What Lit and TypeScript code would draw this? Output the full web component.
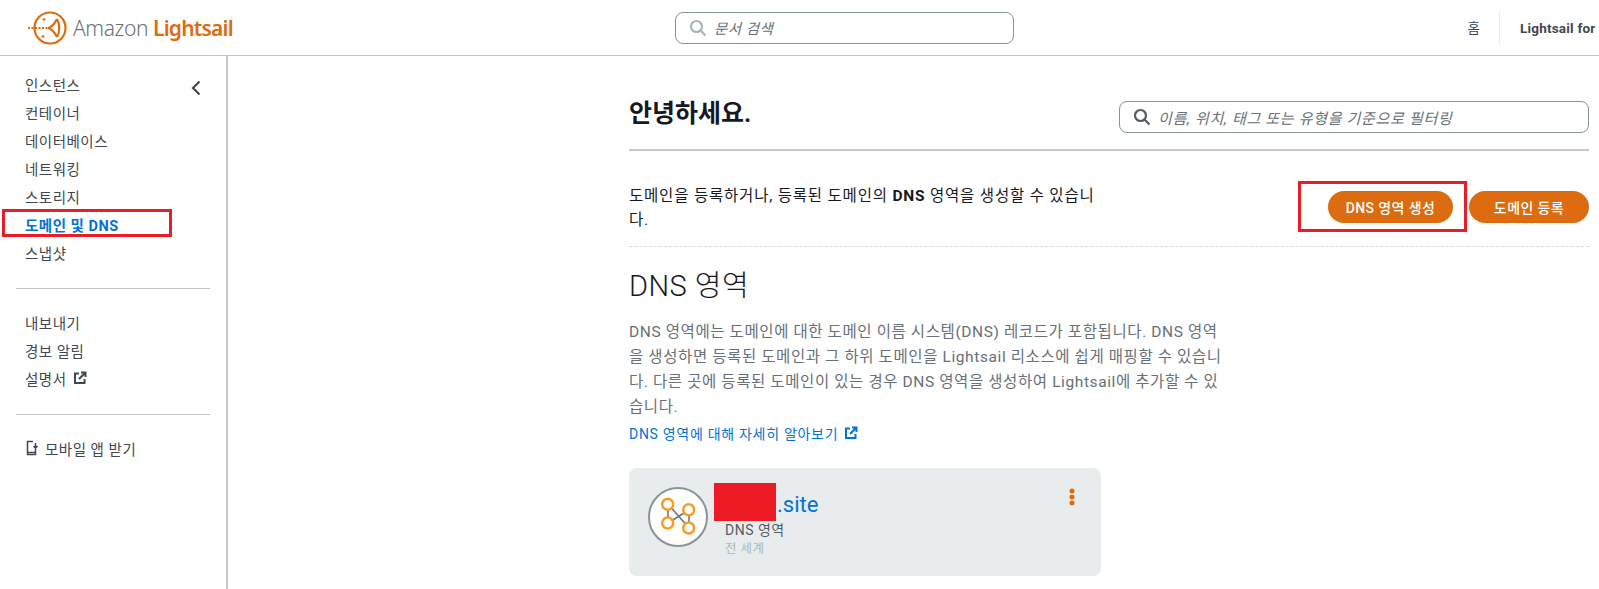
import { LitElement, html, css } from "lit";
import { customElement } from "lit/decorators.js";

const externalIcon = (color: string) => html`
  <svg class="ext" width="14" height="14" viewBox="0 0 14 14" fill="none" stroke=${color} stroke-width="2">
    <path d="M6 2.500H2v9.500h9.500V8" />
    <path d="M6 8l6-6M8 1.500h4.500V6" />
  </svg>
`;

const searchIcon = (color: string) => html`
  <svg width="18" height="18" viewBox="0 0 18 18" fill="none" stroke=${color} stroke-width="2.200">
    <circle cx="7.500" cy="7.500" r="5.500" />
    <path d="M11.500 11.500l5 5" />
  </svg>
`;

@customElement("app-root")
export class AppRoot extends LitElement {
  static styles = css`
    :host {
      display: flex;
      flex-direction: column;
      width: 1599px;
      height: 589px;
      overflow: hidden;
      background: #fff;
      color: #16191f;
      font-family: Roboto, "Noto Sans CJK KR", sans-serif;
      font-size: 14.5px;
      letter-spacing: 0.5px;
    }

    header {
      flex: none;
      display: flex;
      align-items: center;
      height: 55px;
      border-bottom: 1px solid #c6c6cd;
      white-space: nowrap;
    }

    .logo {
      display: flex;
      align-items: center;
      width: 675px;
      padding-left: 28px;
      box-sizing: border-box;
      font-family: "Noto Sans", sans-serif;
      font-size: 21px;
      letter-spacing: -0.4px;
    }

    .logo svg {
      margin-right: 5px;
    }

    .logo .amazon {
      color: #6b7178;
      font-weight: 300;
      margin-right: 5px;
    }

    .logo .lightsail {
      color: #dd6b10;
      font-weight: 600;
      letter-spacing: -0.8px;
    }

    .search {
      display: flex;
      align-items: center;
      gap: 7px;
      height: 32px;
      box-sizing: border-box;
      border: 1px solid #879596;
      border-radius: 8px;
      padding-left: 13px;
      font-style: italic;
      color: #687078;
    }

    .doc-search {
      width: 339px;
    }

    .filter {
      width: 470px;
      font-size: 15px;
      letter-spacing: 0.7px;
    }

    .top-links {
      display: flex;
      align-items: center;
      height: 32px;
      margin-left: auto;
      font-size: 13.5px;
      letter-spacing: 0.2px;
      color: #414750;
    }

    .top-links .home {
      padding-right: 19px;
      line-height: 32px;
      border-right: 1px solid #eaeded;
    }

    .top-links b {
      padding-left: 20px;
      width: 79px;
      overflow: hidden;
      font-weight: 700;
    }

    .body {
      flex: 1;
      display: flex;
      min-height: 0;
    }

    aside {
      flex: none;
      position: relative;
      width: 228px;
      box-sizing: border-box;
      border-right: 2px solid #c6c6cd;
      padding: 14px 0 0 16px;
    }

    .collapse {
      position: absolute;
      left: 191px;
      top: 24px;
    }

    nav {
      display: flex;
      flex-direction: column;
      width: 194px;
      padding-bottom: 22px;
      margin-bottom: 19px;
      border-bottom: 1px solid #c6c6cd;
    }

    nav:last-of-type {
      border-bottom: none;
    }

    nav a {
      position: relative;
      display: flex;
      align-items: center;
      gap: 6px;
      height: 28px;
      padding-left: 9px;
      color: #414750;
    }

    nav a.active {
      color: #0073d5;
      font-weight: 700;
    }

    .mark {
      position: absolute;
      border: 3px solid #ed1c24;
      box-sizing: border-box;
    }

    nav a .mark {
      left: -14px;
      top: -1px;
      width: 170px;
      height: 28px;
    }

    main {
      flex: none;
      width: 960px;
      margin-left: 401px;
      padding-top: 45px;
    }

    .title-row {
      display: flex;
      align-items: flex-start;
      justify-content: space-between;
      height: 48px;
      border-bottom: 2px solid #c6c6cd;
    }

    h1 {
      margin: 0;
      font-size: 25px;
      font-weight: 700;
      line-height: 26px;
      letter-spacing: 0;
      color: #16191f;
    }

    .intro {
      display: flex;
      justify-content: space-between;
      height: 96px;
      box-sizing: border-box;
      padding-top: 33px;
      border-bottom: 1px dashed #d5dbdb;
    }

    .intro p {
      margin: 0;
      width: 478px;
      font-size: 15.500px;
      line-height: 24px;
      letter-spacing: 0.8px;
    }

    .actions {
      display: flex;
      gap: 16px;
      margin-top: -33px;
      padding-top: 40px;
    }

    .btn {
      position: relative;
      display: flex;
      align-items: center;
      justify-content: center;
      height: 32px;
      border-radius: 16px;
      background: #dd6b10;
      color: #fff;
      font-size: 14px;
      font-weight: 500;
      letter-spacing: 0.4px;
      white-space: nowrap;
    }

    .btn.create {
      width: 125px;
    }

    .btn.register {
      width: 120px;
    }

    .btn .mark {
      left: -30px;
      top: -10px;
      width: 169px;
      height: 51px;
    }

    h2 {
      margin: 19px 0 0;
      font-size: 29px;
      font-weight: 300;
      line-height: 40px;
      letter-spacing: 0.5px;
      color: #16191f;
    }

    .desc {
      margin: 14px 0 0;
      width: 600px;
      font-size: 15.500px;
      line-height: 25px;
      letter-spacing: 0.6px;
      color: #687078;
    }

    .more {
      display: flex;
      align-items: center;
      gap: 6px;
      margin-top: 1px;
      height: 24px;
      font-size: 14px;
      letter-spacing: 0.7px;
      color: #0073d5;
    }

    .card {
      display: flex;
      align-items: flex-start;
      width: 472px;
      height: 108px;
      margin-top: 23px;
      box-sizing: border-box;
      padding: 19px 25px 0 19px;
      background: #e9ecec;
      border-radius: 8px;
    }

    .zone-icon {
      flex: none;
      margin-right: 8px;
    }

    .zone-info {
      flex: 1;
      display: flex;
      flex-direction: column;
      padding-left: 9px;
    }

    .zone-name {
      position: relative;
      height: 36px;
      padding-left: 52px;
      font-size: 22px;
      line-height: 36px;
      letter-spacing: 0;
      color: #0073d5;
    }

    .zone-name .redact {
      position: absolute;
      left: -11px;
      top: -4px;
      width: 62px;
      height: 38px;
      background: #ed1c24;
    }

    .zone-type {
      font-size: 14px;
      line-height: 20px;
      margin-top: -3px;
      color: #545b64;
    }

    .zone-scope {
      font-size: 12.500px;
      line-height: 18px;
      color: #aab7b8;
    }

    .dots {
      flex: none;
    }
  `;

  render() {
    return html`
      <header>
        <div class="logo">
          <svg width="40" height="36" viewBox="0 0 40 36" fill="none" stroke="#dd6b10">
            <circle cx="22" cy="18" r="15.500" stroke-width="2.200" />
            <path d="M0 18h20" stroke-width="2" stroke-dasharray="2 1.500" />
            <path d="M20 18c4-1 7-5 9-9M20 18c4 1 7 5 9 9M29 9c3 5 3 13 0 18" stroke-width="2.200" />
            <path d="M16 8v3M14.500 9.500h3M15 25v3M13.500 26.500h3" stroke-width="1.200" />
          </svg>
          <span class="amazon">Amazon</span><span class="lightsail">Lightsail</span>
        </div>
        <div class="search doc-search">${searchIcon("#aab7b8")}<span>문서 검색</span></div>
        <div class="top-links">
          <span class="home">홈</span>
          <b>Lightsail for Developers</b>
        </div>
      </header>
      <div class="body">
        <aside>
          <svg class="collapse" width="10" height="16" viewBox="0 0 10 16" fill="none" stroke="#414750" stroke-width="2.200">
            <path d="M8.500 1.500L2 8l6.500 6.500" />
          </svg>
          <nav>
            <a>인스턴스</a>
            <a>컨테이너</a>
            <a>데이터베이스</a>
            <a>네트워킹</a>
            <a>스토리지</a>
            <a class="active">도메인 및 DNS<span class="mark"></span></a>
            <a>스냅샷</a>
          </nav>
          <nav>
            <a>내보내기</a>
            <a>경보 알림</a>
            <a>설명서 ${externalIcon("#414750")}</a>
          </nav>
          <nav>
            <a>
              <svg width="14" height="16" viewBox="0 0 14 16" fill="none" stroke="#414750" stroke-width="1.500">
                <path d="M8 1.500H2.500v13h8V9" />
                <path d="M2.500 12.500h8M10.500 3v5M8.500 6l2 2.200L12.500 6" />
              </svg>
              모바일 앱 받기
            </a>
          </nav>
        </aside>
        <main>
          <div class="title-row">
            <h1>안녕하세요.</h1>
            <div class="search filter">
              ${searchIcon("#545b64")}<span>이름, 위치, 태그 또는 유형을 기준으로 필터링</span>
            </div>
          </div>
          <div class="intro">
            <p>도메인을 등록하거나, 등록된 도메인의 <b>DNS</b> 영역을 생성할 수 있습니다.</p>
            <div class="actions">
              <div class="btn create">DNS 영역 생성<span class="mark"></span></div>
              <div class="btn register">도메인 등록</div>
            </div>
          </div>
          <h2>DNS 영역</h2>
          <p class="desc">
            DNS 영역에는 도메인에 대한 도메인 이름 시스템(DNS) 레코드가 포함됩니다. DNS 영역을 생성하면 등록된 도메인과 그 하위
            도메인을 Lightsail 리소스에 쉽게 매핑할 수 있습니다. 다른 곳에 등록된 도메인이 있는 경우 DNS 영역을 생성하여
            Lightsail에 추가할 수 있습니다.
          </p>
          <div class="more">DNS 영역에 대해 자세히 알아보기 ${externalIcon("#0073d5")}</div>
          <div class="card">
            <svg class="zone-icon" width="60" height="60" viewBox="0 0 60 60" fill="#fff">
              <circle cx="30" cy="30" r="29" stroke="#879596" stroke-width="2" />
              <path d="M20 17l21 24M20 36l21-13M20 17v19M41 23v18" stroke="#687078" stroke-width="1.500" fill="none" />
              <g stroke="#f79d26" stroke-width="2.500">
                <circle cx="19.700" cy="17.300" r="5.500" />
                <circle cx="40.700" cy="22.700" r="5.500" />
                <circle cx="19.700" cy="36" r="5.500" />
                <circle cx="40.700" cy="41" r="5.500" />
              </g>
            </svg>
            <div class="zone-info">
              <div class="zone-name"><span class="redact"></span>.site</div>
              <div class="zone-type">DNS 영역</div>
              <div class="zone-scope">전 세계</div>
            </div>
            <svg class="dots" width="8" height="20" viewBox="0 0 8 20" fill="#dd6b10">
              <circle cx="4" cy="4" r="2.500" />
              <circle cx="4" cy="10" r="2.500" />
              <circle cx="4" cy="16" r="2.500" />
            </svg>
          </div>
        </main>
      </div>
    `;
  }
}
